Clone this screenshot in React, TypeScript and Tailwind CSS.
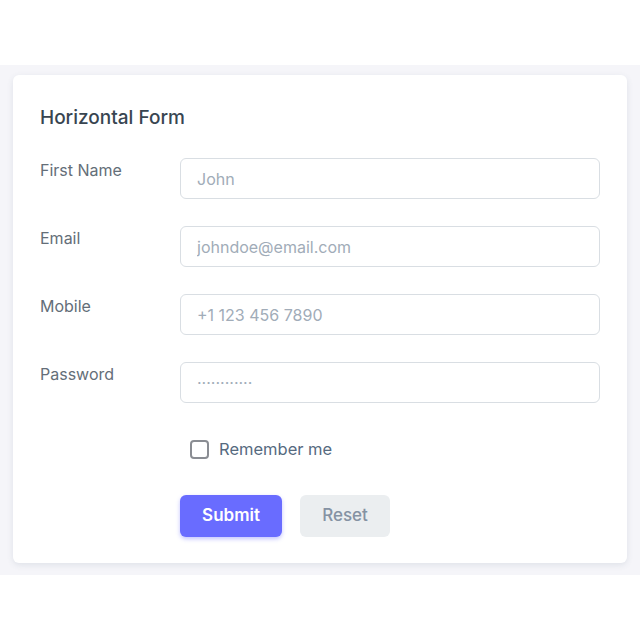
export default function App() {
  const rows = [
    { label: "First Name", placeholder: "John" },
    { label: "Email", placeholder: "johndoe@email.com" },
    { label: "Mobile", placeholder: "+1 123 456 7890" },
    { label: "Password", placeholder: "············" },
  ];

  return (
    <div className="h-[640px] bg-white pt-[65px]" style={{ fontFamily: "Inter, 'Open Sans', sans-serif" }}>
      <div className="bg-[#f5f5f9] px-[13px] pt-[10px] pb-[12px]">
        <div className="rounded-[6px] bg-white px-[27px] pt-[24px] pb-[26px] shadow-[0_2px_6px_0_rgba(67,89,113,0.12)]">
          <h5 className="mb-[23px] pt-[1px] text-[19px] leading-[35px] font-medium text-[#384551]">Horizontal Form</h5>

          <form className="flex flex-col gap-[27px]">
            {rows.map((r) => (
              <div key={r.label} className="flex items-start">
                <label className="w-[140px] shrink-0 text-[16px] leading-[24px] text-[#646e78]">{r.label}</label>
                <input
                  type="text"
                  placeholder={r.placeholder}
                  className="h-[41px] flex-1 rounded-[6px] border border-[#d9dee3] px-[16px] text-[16px] text-[#697a8d] outline-none placeholder:text-[#a1acb8]"
                />
              </div>
            ))}
          </form>

          <div className="mt-[36px] ml-[150px] flex items-center gap-[10px]">
            <span className="h-[19px] w-[19px] rounded-[4px] border-2 border-[#8a8d93]" />
            <span className="text-[16.5px] leading-[20px] text-[#566a7f]">Remember me</span>
          </div>

          <div className="mt-[36px] ml-[140px] flex gap-[18px]">
            <button className="h-[42px] w-[102px] rounded-[6px] bg-[#696cff] text-[17px] font-semibold text-white shadow-[0_2px_4px_0_rgba(105,108,255,0.4)]">
              Submit
            </button>
            <button className="h-[42px] w-[90px] rounded-[6px] bg-[#ebeef0] text-[17px] font-medium text-[#8592a3]">
              Reset
            </button>
          </div>
        </div>
      </div>
    </div>
  );
}
